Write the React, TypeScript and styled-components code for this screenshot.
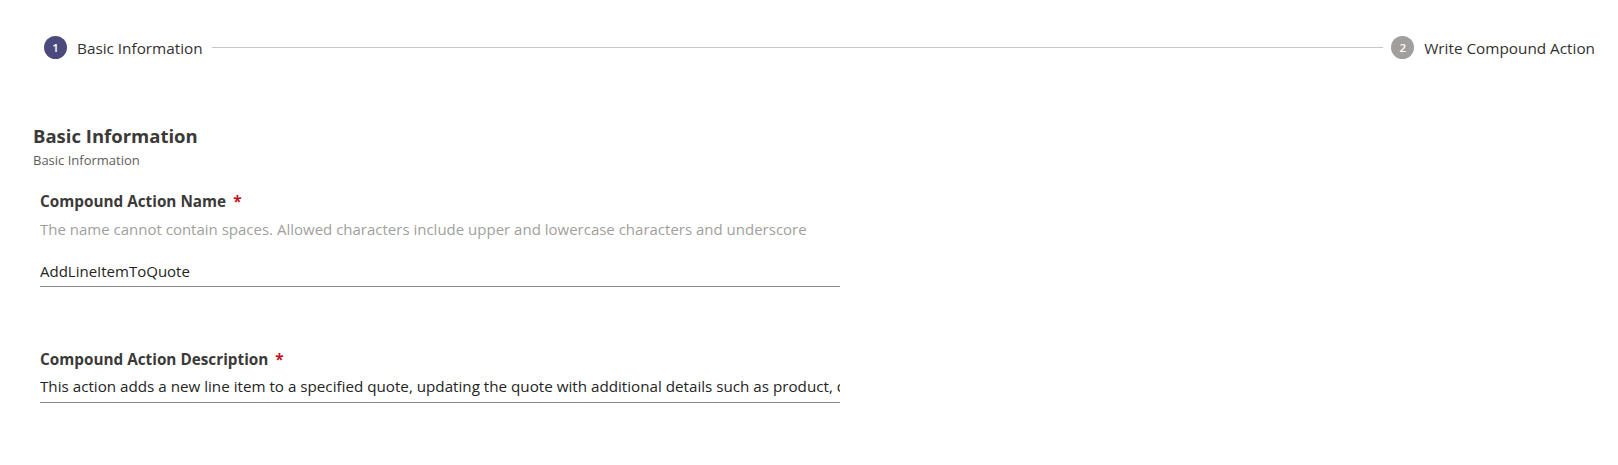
import React from "react";
import styled, { createGlobalStyle } from "styled-components";

const Global = createGlobalStyle`
  html, body { margin: 0; padding: 0; background: #ffffff; }
  body { font-family: "Open Sans", "Noto Sans", Arial, sans-serif; color: #323130; }
  * { box-sizing: border-box; }
`;

const Page = styled.div`
  width: 1618px;
  height: 465px;
  background: #fff;
  overflow: hidden;
`;

const Stepper = styled.div`
  display: flex;
  align-items: center;
  padding: 36px 23px 0 44px;
  height: 59px;
`;

const Step = styled.div`
  display: flex;
  align-items: center;
  gap: 10px;
  flex-shrink: 0;
`;

const StepCircle = styled.div<{ $active?: boolean }>`
  width: 23px;
  height: 23px;
  border-radius: 50%;
  background: ${(p) => (p.$active ? "#4b4a7d" : "#a19f9d")};
  color: #fff;
  font-size: 11.5px;
  font-weight: 600;
  display: flex;
  align-items: center;
  justify-content: center;
`;

const StepLabel = styled.span`
  font-size: 15.3px;
  color: #323130;
  white-space: nowrap;
`;

const Connector = styled.div`
  flex: 1;
  height: 1px;
  background: #c8c6c4;
  margin: 0 8px 0 9px;
`;

const Section = styled.section`
  padding: 66px 0 0 33px;
`;

const Title = styled.h2`
  margin: 0;
  font-size: 18.5px;
  font-weight: 700;
  line-height: 22px;
  color: #3b3a39;
`;

const Subtitle = styled.div`
  margin-top: 3px;
  font-size: 13px;
  line-height: 20px;
  color: #605e5c;
`;

const Field = styled.div<{ $gap: number }>`
  width: 800px;
  margin: ${(p) => p.$gap}px 0 0 7px;
  display: flex;
  flex-direction: column;
`;

const Label = styled.label`
  font-size: 15.3px;
  font-weight: 700;
  line-height: 20px;
  color: #3b3a39;
`;

const Required = styled.span`
  color: #c50f1f;
  margin-left: 7px;
  font-weight: 700;
`;

const Hint = styled.div`
  font-size: 15px;
  line-height: 20px;
  color: #a19f9d;
  margin-top: 8px;
  white-space: nowrap;
`;

const Input = styled.input<{ $mt: number; $size: number; $pb: number }>`
  margin-top: ${(p) => p.$mt}px;
  width: 100%;
  border: none;
  border-bottom: 1px solid #8a8886;
  outline: none;
  padding: 0 0 ${(p) => p.$pb}px 0;
  font-family: inherit;
  font-size: ${(p) => p.$size}px;
  line-height: 20px;
  height: ${(p) => 21 + p.$pb}px;
  color: #242424;
  background: transparent;
`;

export default function App() {
  return (
    <Page>
      <Global />
      <Stepper>
        <Step>
          <StepCircle $active>1</StepCircle>
          <StepLabel>Basic Information</StepLabel>
        </Step>
        <Connector />
        <Step>
          <StepCircle>2</StepCircle>
          <StepLabel>Write Compound Action</StepLabel>
        </Step>
      </Stepper>
      <Section>
        <Title>Basic Information</Title>
        <Subtitle>Basic Information</Subtitle>
        <Field $gap={21}>
          <Label>
            Compound Action Name<Required>*</Required>
          </Label>
          <Hint>
            The name cannot contain spaces. Allowed characters include upper and lowercase characters and underscore
          </Hint>
          <Input $mt={22} $size={15} $pb={5} defaultValue="AddLineItemToQuote" readOnly />
        </Field>
        <Field $gap={62}>
          <Label>
            Compound Action Description<Required>*</Required>
          </Label>
          <Input
            $mt={7}
            $size={15.2}
            $pb={6}
            defaultValue="This action adds a new line item to a specified quote, updating the quote with additional details such as product, quantity, and price."
            readOnly
          />
        </Field>
      </Section>
    </Page>
  );
}
